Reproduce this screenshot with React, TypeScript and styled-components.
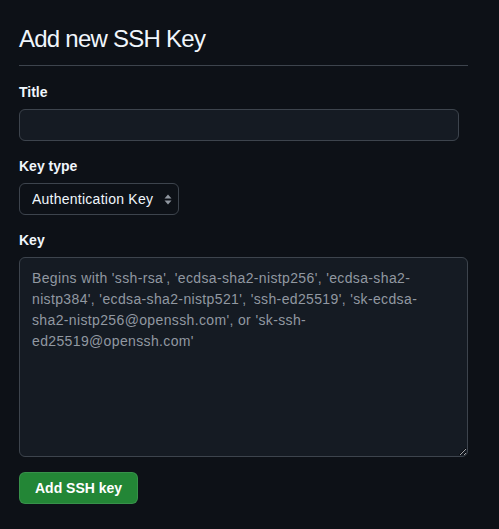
import React from "react";
import styled, { createGlobalStyle } from "styled-components";

const Global = createGlobalStyle`
  html, body { margin: 0; padding: 0; background: #0d1117; }
  body { font-family: "Liberation Sans", Arial, sans-serif; color: #f0f6fc; }
  * { box-sizing: border-box; }
`;

const Page = styled.div`
  padding: 20px 31px 24px 19px;
  min-height: 529px;
  background: #0d1117;
`;

const Header = styled.h2`
  margin: 0;
  font-size: 24px;
  font-weight: 400;
  letter-spacing: -0.75px;
  line-height: 1.25;
  padding: 4px 0 11px;
  border-bottom: 1px solid #3d444d;
  width: 449px;
  color: #f0f6fc;
`;

const Form = styled.form`
  display: flex;
  flex-direction: column;
  padding-top: 19px;
`;

const Field = styled.div`
  display: flex;
  flex-direction: column;
  gap: 9px;
  margin-bottom: 18px;
`;

const Label = styled.label`
  font-size: 14px;
  font-weight: 700;
  line-height: 15px;
  color: #f0f6fc;
`;

const TextInput = styled.input`
  width: 440px;
  height: 32px;
  background: #151b23;
  border: 1px solid #3d444d;
  border-radius: 6px;
  color: #f0f6fc;
  font: 14px "Liberation Sans", Arial, sans-serif;
  letter-spacing: 0.3px;
  padding: 0 12px;
  outline: none;
`;

const SelectWrap = styled.div`
  position: relative;
  width: 160px;
`;

const Select = styled.select`
  appearance: none;
  width: 160px;
  height: 32px;
  background: #0d1117;
  border: 1px solid #3d444d;
  border-radius: 6px;
  color: #f0f6fc;
  font: 14px "Liberation Sans", Arial, sans-serif;
  letter-spacing: 0.25px;
  padding: 0 24px 0 12px;
  outline: none;
`;

const Caret = styled.svg`
  position: absolute;
  right: 7px;
  top: 11px;
  pointer-events: none;
`;

const TextArea = styled.textarea`
  width: 449px;
  height: 200px;
  background: #151b23;
  border: 1px solid #3d444d;
  border-radius: 6px;
  color: #f0f6fc;
  font-family: "Liberation Sans", Arial, sans-serif;
  font-size: 14px;
  line-height: 21px;
  letter-spacing: 0.36px;
  padding: 10px 18px 10px 12px;
  outline: none;
  resize: vertical;
  &::placeholder { color: #9198a1; }
`;

const Button = styled.button`
  align-self: flex-start;
  height: 32px;
  padding: 0 15px;
  margin-top: -3px;
  background: #238636;
  border: 1px solid rgba(240, 246, 252, 0.1);
  border-radius: 6px;
  color: #ffffff;
  font: 700 14px "Liberation Sans", Arial, sans-serif;
  cursor: pointer;
`;

export default function App() {
  return (
    <Page>
      <Global />
      <Header>Add new SSH Key</Header>
      <Form onSubmit={(e) => e.preventDefault()}>
        <Field>
          <Label htmlFor="title">Title</Label>
          <TextInput id="title" type="text" />
        </Field>
        <Field>
          <Label htmlFor="type">Key type</Label>
          <SelectWrap>
            <Select id="type" defaultValue="auth">
              <option value="auth">Authentication Key</option>
              <option value="sign">Signing Key</option>
            </Select>
            <Caret width="8" height="11" viewBox="0 0 8 11">
              <path d="M4 0.5 L7.5 4.5 H0.5 Z" fill="#9198a1" />
              <path d="M4 10.5 L7.5 6.5 H0.5 Z" fill="#9198a1" />
            </Caret>
          </SelectWrap>
        </Field>
        <Field>
          <Label htmlFor="key">Key</Label>
          <TextArea
            id="key"
            placeholder="Begins with 'ssh-rsa', 'ecdsa-sha2-nistp256', 'ecdsa-sha2-nistp384', 'ecdsa-sha2-nistp521', 'ssh-ed25519', 'sk-ecdsa-sha2-nistp256@openssh.com', or 'sk-ssh-ed25519@openssh.com'"
          />
        </Field>
        <Button type="submit">Add SSH key</Button>
      </Form>
    </Page>
  );
}
